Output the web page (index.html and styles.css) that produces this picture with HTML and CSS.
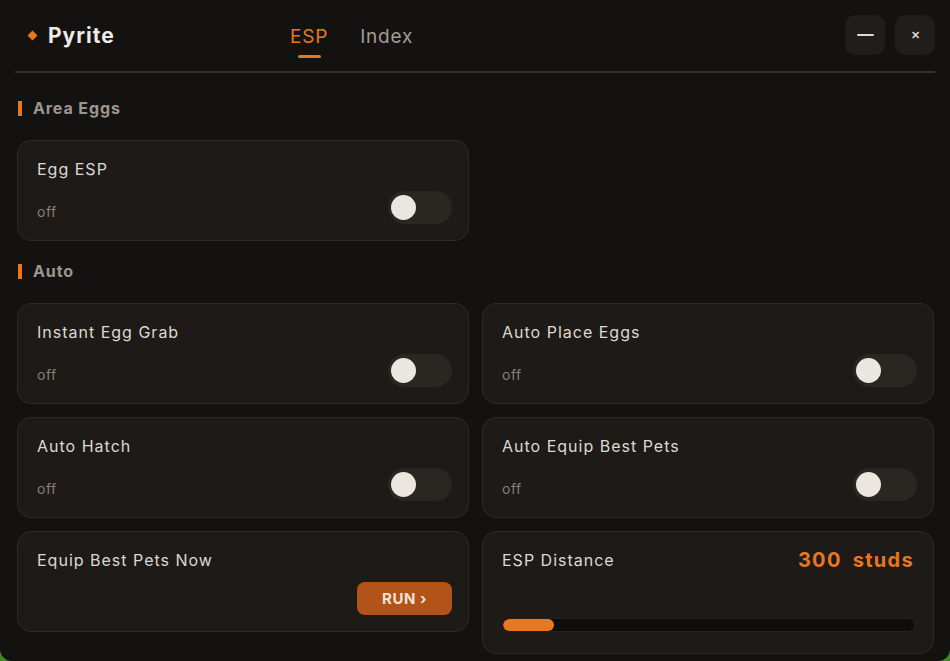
FILE: index.html
```html
<!DOCTYPE html>
<html lang="en">
<head>
	<meta charset="UTF-8">
	<title>Pyrite</title>
	<link rel="stylesheet" href="styles.css">
</head>
<body>
<div class="window">
	<div class="topbar">
		<div class="brand">
			<span class="brand-dot"></span>
			<span class="brand-name">Pyrite</span>
		</div>
		<div class="tabs">
			<span class="tab tab-active">ESP</span>
			<span class="tab">Index</span>
		</div>
		<div class="win-btns">
			<span class="win-btn"><span class="win-min"></span></span>
			<span class="win-btn win-close">&#x2715;</span>
		</div>
	</div>

	<div class="content">
		<div class="section-title">Area Eggs</div>
		<div class="grid">
			<div class="card">
				<div class="card-title">Egg ESP</div>
				<div class="card-row">
					<span class="card-state">off</span>
					<span class="toggle"><span class="knob"></span></span>
				</div>
			</div>
		</div>

		<div class="section-title">Auto</div>
		<div class="grid">
			<div class="card">
				<div class="card-title">Instant Egg Grab</div>
				<div class="card-row">
					<span class="card-state">off</span>
					<span class="toggle"><span class="knob"></span></span>
				</div>
			</div>
			<div class="card">
				<div class="card-title">Auto Place Eggs</div>
				<div class="card-row">
					<span class="card-state">off</span>
					<span class="toggle"><span class="knob"></span></span>
				</div>
			</div>
			<div class="card">
				<div class="card-title">Auto Hatch</div>
				<div class="card-row">
					<span class="card-state">off</span>
					<span class="toggle"><span class="knob"></span></span>
				</div>
			</div>
			<div class="card">
				<div class="card-title">Auto Equip Best Pets</div>
				<div class="card-row">
					<span class="card-state">off</span>
					<span class="toggle"><span class="knob"></span></span>
				</div>
			</div>
			<div class="card">
				<div class="card-title">Equip Best Pets Now</div>
				<div class="card-row card-row-end">
					<span class="run-btn">RUN &rsaquo;</span>
				</div>
			</div>
			<div class="card card-slider">
				<div class="slider-head">
					<span class="card-title">ESP Distance</span>
					<span class="slider-value">300 studs</span>
				</div>
				<div class="track"><div class="track-fill" style="width: 12.5%"></div></div>
			</div>
		</div>
	</div>
</div>
</body>
</html>
```

FILE: styles.css
```css
*{margin: 0; padding: 0; box-sizing: border-box}
html,body{height: 100%}
body{
	background: #3f8a22;
	font-family: Inter, "Open Sans", sans-serif;
	overflow: hidden;
}
.window{
	height: 100%;
	background: #141210;
	border-radius: 0 0 12px 12px;
	color: #ddd8d1;
}

/* top bar */
.topbar{
	height: 73px;
	margin: 0 15px;
	border-bottom: 2px solid #35312d;
	display: flex;
	align-items: center;
}
.brand{
	width: 275px;
	display: flex;
	align-items: center;
}
.brand-dot{
	width: 7px;
	height: 7px;
	background: #e8781f;
	transform: rotate(45deg);
	margin: 0 12px 0 14px;
}
.brand-name{
	font-size: 21px;
	font-weight: 700;
	color: #eeeae4;
	letter-spacing: 1px;
}
.tabs{
	flex: 1;
	display: flex;
	gap: 32px;
	padding-top: 2px;
}
.tab{
	font-size: 19px;
	color: #a29c94;
	position: relative;
	letter-spacing: 0.8px;
}
.tab-active{color: #e8781f}
.tab-active:after{
	content: "";
	position: absolute;
	left: 8px;
	right: 7px;
	bottom: -10px;
	height: 3px;
	border-radius: 2px;
	background: #e8781f;
}
.win-btns{
	display: flex;
	gap: 10px;
	margin-top: -2px;
}
.win-btn{
	width: 40px;
	height: 40px;
	border-radius: 10px;
	background: #201d1a;
	display: flex;
	align-items: center;
	justify-content: center;
	color: #d8d3cc;
}
.win-min{
	width: 17px;
	height: 2px;
	background: #ddd8d1;
	border-radius: 1px;
}
.win-close{
	font-size: 11px;
	font-weight: 700;
}

/* content */
.content{padding: 25px 17px 0}
.section-title{
	height: 20px;
	line-height: 20px;
	font-size: 16px;
	font-weight: 700;
	color: #9c968e;
	padding-left: 16px;
	position: relative;
	margin-bottom: 22px;
	letter-spacing: 0.9px;
}
.section-title:before{
	content: "";
	position: absolute;
	left: 1px;
	top: 3px;
	width: 4px;
	height: 15px;
	background: #e8781f;
}
.grid + .section-title{margin-top: 20px}
.grid{
	display: grid;
	grid-template-columns: 452px 452px;
	column-gap: 13px;
	row-gap: 13px;
	align-items: start;
}
.card{
	height: 101px;
	background: #1d1a17;
	border: 1px solid #2e2a26;
	border-radius: 14px;
	padding: 16px 16px 16px 19px;
	display: flex;
	flex-direction: column;
	justify-content: space-between;
}
.card-title{
	font-size: 16px;
	line-height: 24px;
	color: #ddd8d1;
	letter-spacing: 1px;
}
.card-row{
	display: flex;
	align-items: center;
	justify-content: space-between;
}
.card-row-end{justify-content: flex-end}
.card-state{
	font-size: 14px;
	color: #857f77;
	margin-top: 8px;
	letter-spacing: 0.5px;
}
.toggle{
	width: 64px;
	height: 33px;
	border-radius: 17px;
	background: #2a2622;
	display: flex;
	align-items: center;
	padding-left: 3px;
}
.knob{
	width: 25px;
	height: 25px;
	border-radius: 50%;
	background: #ebe6df;
}
.run-btn{
	width: 95px;
	height: 33px;
	border-radius: 8px;
	background: #b2541a;
	color: #f1e2d4;
	font-size: 15px;
	font-weight: 700;
	letter-spacing: 0.5px;
	display: flex;
	align-items: center;
	justify-content: center;
}

/* slider card */
.card-slider{
	height: 123px;
	justify-content: flex-start;
	padding-bottom: 21px;
}
.slider-head{
	display: flex;
	align-items: center;
	justify-content: space-between;
	padding-right: 3px;
}
.slider-value{
	font-size: 20px;
	font-weight: 700;
	color: #e8781f;
	letter-spacing: 1.3px;
	word-spacing: 5px;
}
.track{
	margin-top: 46px;
	margin-right: 2px;
	height: 14px;
	border-radius: 7px;
	background: #0f0d0b;
	border: 1px solid #24201d;
	overflow: hidden;
}
.track-fill{
	height: 100%;
	border-radius: 7px;
	background: #e8781f;
}
```
